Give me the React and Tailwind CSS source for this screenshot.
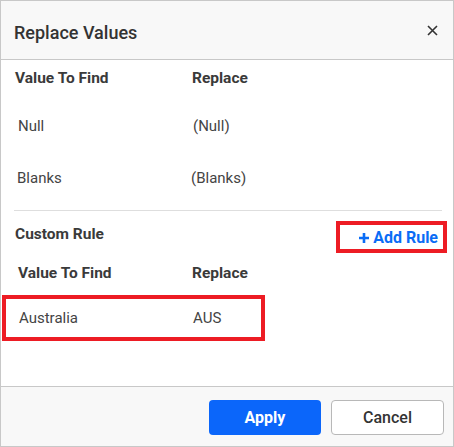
import React from "react";

export default function App() {
  const font = { fontFamily: "Roboto, 'Noto Sans', sans-serif" };
  return (
    <div
      className="w-[454px] h-[447px] border border-[#c8c8c8] bg-white flex flex-col text-[#333]"
      style={font}
    >
      {/* Header */}
      <div className="h-[59px] shrink-0 bg-[#f8f8f8] border-b border-[#c8c8c8] flex items-center justify-between pl-[13px] pr-[15px] pt-[6px]">
        <div className="text-[18px] font-medium text-[#333] leading-none">Replace Values</div>
        <svg width="11" height="11" viewBox="0 0 11 11" className="mb-[5px]">
          <path d="M1 1L10 10M10 1L1 10" stroke="#333" strokeWidth="1.6" />
        </svg>
      </div>

      {/* Body */}
      <div className="flex-1 flex flex-col">
        <div className="h-[38px] flex items-center text-[15.5px] font-bold text-[#3a3a3a]">
          <div className="w-[191px] pl-[14px]">Value To Find</div>
          <div>Replace</div>
        </div>
        <div className="h-[56px] flex items-center text-[15px] text-[#444]">
          <div className="w-[191px] pl-[17px]">Null</div>
          <div className="pl-[1px]">(Null)</div>
        </div>
        <div className="h-[48px] flex items-center text-[15px] text-[#444]">
          <div className="w-[190px] pl-[16px]">Blanks</div>
          <div>(Blanks)</div>
        </div>
        <div className="mt-[8px] ml-[13px] mr-[11px] h-px bg-[#dedede]" />

        <div className="flex items-start justify-between pt-[10px] pr-[6px]">
          <div className="text-[15.5px] font-bold text-[#3a3a3a] pl-[14px] pt-[6px] leading-none">Custom Rule</div>
          <div className="w-[111px] h-[32px] border-4 border-[#ed1c24] flex items-center justify-end pr-[5px] pt-[1px]">
            <span className="flex items-center gap-[4px] text-[16px] font-bold text-[#0a6cf6] leading-none">
              <svg width="10" height="10" viewBox="0 0 10 10">
                <path d="M5 0V10M0 5H10" stroke="#0a6cf6" strokeWidth="2.6" />
              </svg>
              Add Rule
            </span>
          </div>
        </div>

        <div className="h-[32px] flex items-center text-[15.5px] font-bold text-[#3a3a3a] mt-[5px]">
          <div className="w-[191px] pl-[17px]">Value To Find</div>
          <div>Replace</div>
        </div>

        <div className="ml-[1px] mt-[5px] w-[263px] h-[46px] border-4 border-[#ed1c24] flex items-center text-[15px] text-[#444]">
          <div className="w-[187px] pl-[13px]">Australia</div>
          <div>AUS</div>
        </div>
      </div>

      {/* Footer */}
      <div className="h-[60px] shrink-0 bg-[#f8f8f8] border-t border-[#c8c8c8] flex items-center justify-end gap-[10px] pr-[9px] pt-[2px]">
        <button className="w-[112px] h-[35px] rounded-[4px] bg-[#0b66fa] text-white text-[16px] font-bold">
          Apply
        </button>
        <button className="w-[113px] h-[35px] rounded-[4px] bg-white border border-[#b8b8b8] text-[#333] text-[16px] font-medium">
          Cancel
        </button>
      </div>
    </div>
  );
}
